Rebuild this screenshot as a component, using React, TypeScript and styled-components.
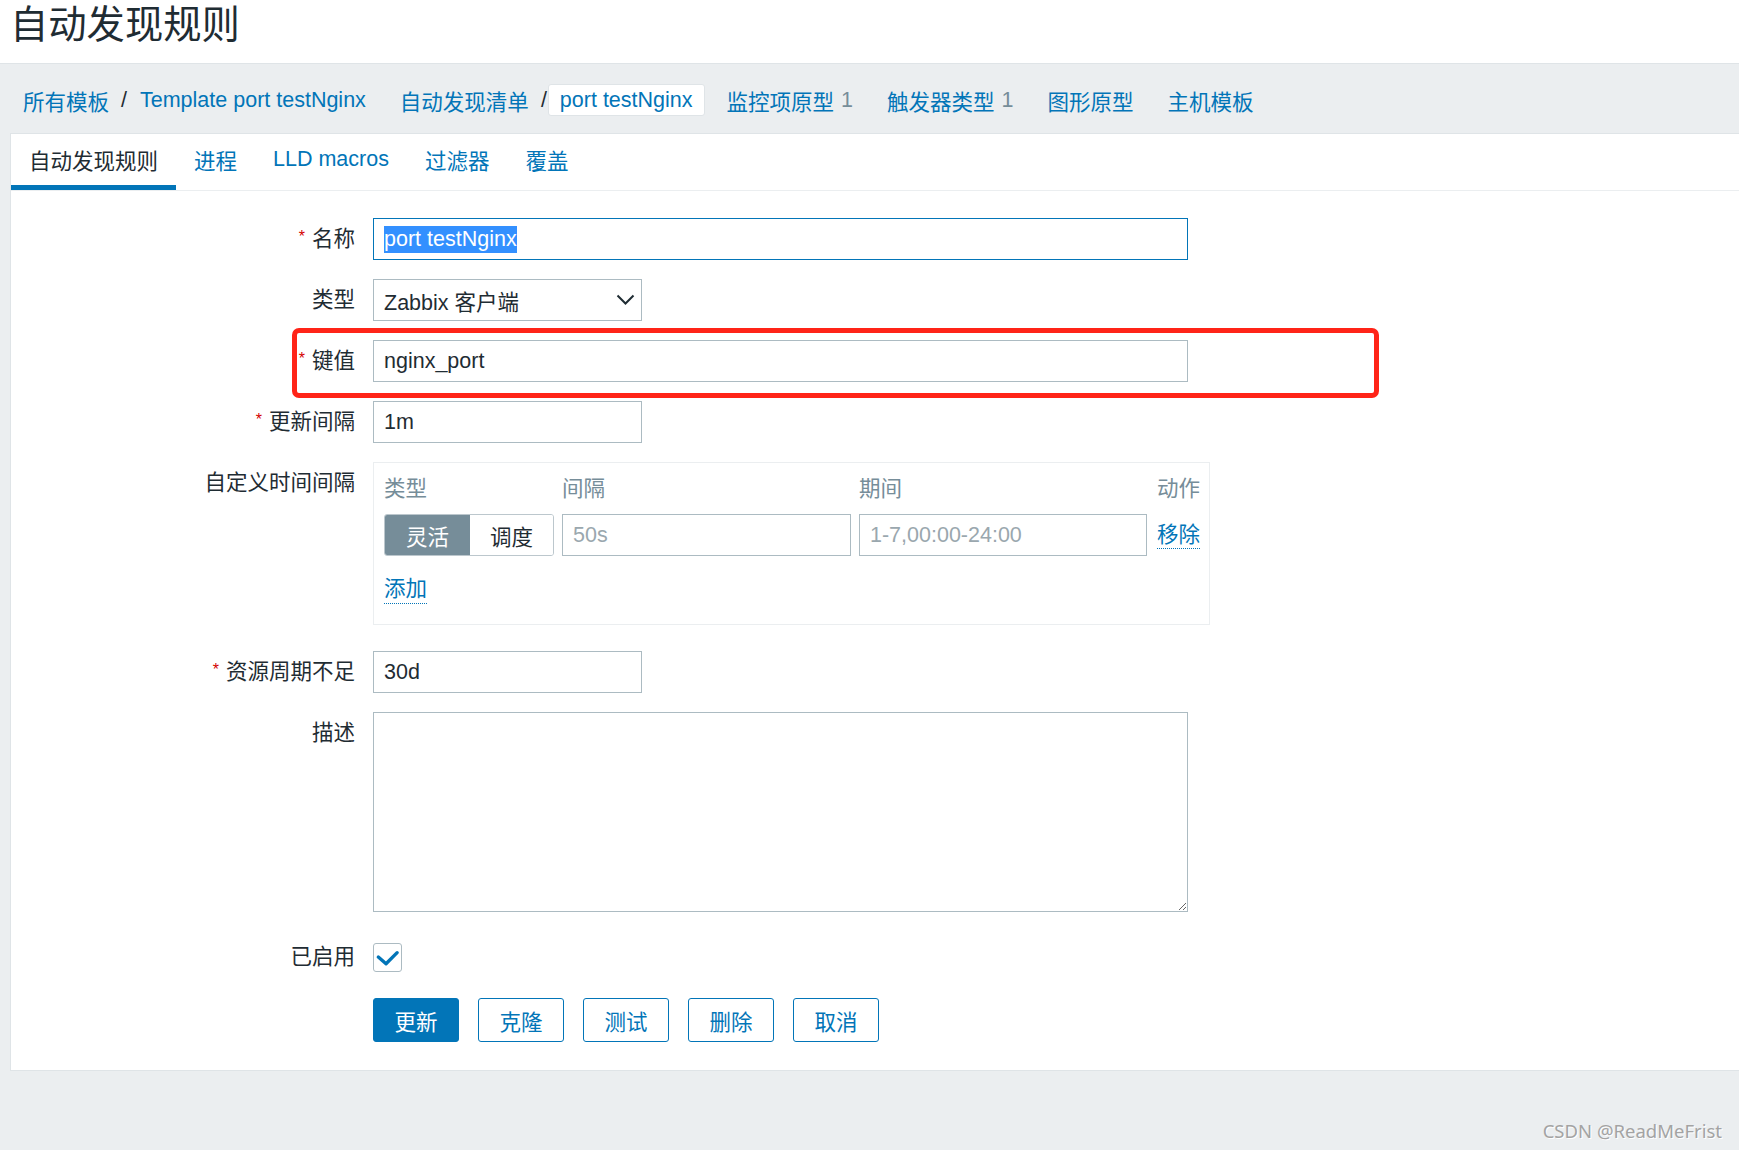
import React from "react";
import styled, { createGlobalStyle } from "styled-components";

const FONT = `"Liberation Sans", "Noto Sans CJK SC", sans-serif`;
const BLUE = "#0275b8";
const TEXT = "#1f2c33";
const GRAY = "#768d99";
const BORDER = "#acbbc2";

const GlobalStyle = createGlobalStyle`
  html, body { margin: 0; padding: 0; }
  body { background: #ebeef0; font-family: ${FONT}; color: ${TEXT}; }
  * { box-sizing: border-box; }
`;

const Page = styled.div`
  min-height: 1150px;
  position: relative;
  background: #ebeef0;
`;

const Header = styled.header`
  height: 63px;
  background: #fff;
  padding: 3px 0 0 10px;
`;

const Title = styled.h1`
  margin: 0;
  font-size: 38.3px;
  line-height: 44px;
  font-weight: normal;
  color: ${TEXT};
`;

const Band = styled.nav`
  border-top: 1px solid #dfe4e7;
  padding: 20px 0 17px 11px;
  display: flex;
  align-items: center;
  gap: 10px;
`;

const CrumbGroup = styled.div`
  display: flex;
  align-items: center;
`;

const Crumb = styled.a<{ $current?: boolean }>`
  display: flex;
  align-items: center;
  height: 32px;
  padding: 0 11px;
  font-size: 21.5px;
  color: ${BLUE};
  text-decoration: none;
  white-space: nowrap;
  background: ${(p) => (p.$current ? "#fff" : "transparent")};
  border: 1px solid ${(p) => (p.$current ? "#dfe4e7" : "transparent")};
  border-radius: 3px;
`;

const Sep = styled.span`
  font-size: 21.5px;
  color: ${TEXT};
  padding: 0 1px 0 0;
`;

const Count = styled.span`
  color: ${GRAY};
  margin-left: 7px;
`;

const Panel = styled.main`
  margin-left: 10px;
  background: #fff;
  border: 1px solid #dfe4e7;
  border-right: none;
`;

const TabBar = styled.div`
  display: flex;
  border-bottom: 1px solid #ebeef0;
`;

const Tab = styled.a<{ $active?: boolean }>`
  display: flex;
  align-items: center;
  height: 56px;
  padding: 0 18px 0;
  font-size: 21.5px;
  white-space: nowrap;
  color: ${(p) => (p.$active ? TEXT : BLUE)};
  border-bottom: 5px solid ${(p) => (p.$active ? BLUE : "transparent")};
`;

const Form = styled.form`
  display: flex;
  flex-direction: column;
  gap: 19px;
  padding: 27px 0 28px;
`;

const Row = styled.div<{ $mt?: number; $center?: boolean }>`
  position: relative;
  display: grid;
  grid-template-columns: 344px 1fr;
  column-gap: 18px;
  align-items: ${(p) => (p.$center ? "center" : "start")};
  margin-top: ${(p) => p.$mt ?? 0}px;
`;

const Label = styled.label<{ $lh?: number }>`
  display: block;
  text-align: right;
  font-size: 21.5px;
  height: ${(p) => p.$lh ?? 42}px;
  line-height: ${(p) => p.$lh ?? 42}px;
  white-space: nowrap;
  color: ${TEXT};
`;

const Req = styled.span`
  color: #d40000;
  font-size: 16px;
  line-height: 0;
  margin-right: 7px;
  vertical-align: 4px;
`;

const TextInput = styled.input<{ $w: number }>`
  width: ${(p) => p.$w}px;
  height: 42px;
  border: 1px solid ${BORDER};
  border-radius: 0;
  padding: 0 10px;
  font-family: ${FONT};
  font-size: 21.5px;
  color: ${TEXT};
  background: #fff;
  outline: none;
  display: block;
  &::placeholder { color: #9aa7ae; }
`;

const FocusedInput = styled.div<{ $w: number }>`
  width: ${(p) => p.$w}px;
  height: 42px;
  border: 1px solid ${BLUE};
  padding: 0 10px;
  display: flex;
  align-items: center;
  font-size: 21.5px;
`;

const Selected = styled.span`
  background: #3390ff;
  color: #fff;
  line-height: 27px;
`;

const Select = styled.div`
  width: 269px;
  height: 42px;
  border: 1px solid ${BORDER};
  padding: 0 6px 0 10px;
  display: flex;
  align-items: center;
  justify-content: space-between;
  font-size: 21.5px;
  color: ${TEXT};
`;

const Highlight = styled.div`
  position: absolute;
  left: 281px;
  top: -12px;
  width: 1087px;
  height: 70px;
  border: 5px solid #ff2418;
  border-radius: 7px;
  pointer-events: none;
`;

const IntervalBox = styled.div`
  width: 837px;
  border: 1px solid #ebeef0;
  padding: 10px 9px 20px 10px;
`;

const IntervalGrid = styled.div`
  display: grid;
  grid-template-columns: 170px 289px 288px auto;
  column-gap: 8px;
  row-gap: 9px;
  align-items: center;
  & > :nth-child(4n) { margin-left: 2px; }
`;

const Head = styled.div`
  font-size: 21.5px;
  line-height: 32px;
  color: ${GRAY};
`;

const Segmented = styled.div`
  display: flex;
  height: 42px;
  border: 1px solid #bcc7cd;
  border-radius: 3px;
  overflow: hidden;
`;

const Segment = styled.div<{ $active?: boolean; $w: number }>`
  width: ${(p) => p.$w}px;
  display: flex;
  align-items: center;
  justify-content: center;
  font-size: 21.5px;
  background: ${(p) => (p.$active ? GRAY : "#fff")};
  color: ${(p) => (p.$active ? "#fff" : TEXT)};
`;

const DotLink = styled.a`
  font-size: 21.5px;
  color: ${BLUE};
  text-decoration: none;
  border-bottom: 1px dotted ${BLUE};
  line-height: 26px;
  justify-self: start;
`;

const AddWrap = styled.div`
  margin-top: 20px;
  height: 28px;
  display: flex;
`;

const TextArea = styled.textarea`
  width: 815px;
  height: 200px;
  border: 1px solid ${BORDER};
  border-radius: 0;
  resize: vertical;
  font-family: ${FONT};
  font-size: 21.5px;
  padding: 6px 10px;
  display: block;
  outline: none;
`;

const CheckBox = styled.div`
  width: 29px;
  height: 29px;
  border: 1px solid ${BORDER};
  border-radius: 3px;
  display: flex;
  align-items: center;
  justify-content: center;
`;

const Buttons = styled.div`
  grid-column: 2;
  display: flex;
  gap: 19px;
`;

const Button = styled.button<{ $primary?: boolean }>`
  width: 86px;
  height: 44px;
  border-radius: 3px;
  border: 1px solid ${BLUE};
  background: ${(p) => (p.$primary ? BLUE : "#fff")};
  color: ${(p) => (p.$primary ? "#fff" : BLUE)};
  font-family: ${FONT};
  font-size: 21.5px;
  padding: 0;
  cursor: pointer;
`;

const Watermark = styled.div`
  position: absolute;
  right: 17px;
  bottom: 7px;
  font-family: "Noto Sans", "Open Sans", sans-serif;
  font-size: 18.5px;
  color: #a3a3a3;
  text-shadow: 1px 1px 0 #fff;
`;

export default function App() {
  return (
    <Page>
      <GlobalStyle />
      <Header>
        <Title>自动发现规则</Title>
      </Header>
      <Band>
        <CrumbGroup>
          <Crumb>所有模板</Crumb>
          <Sep>/</Sep>
          <Crumb>Template port testNginx</Crumb>
        </CrumbGroup>
        <CrumbGroup>
          <Crumb>自动发现清单</Crumb>
          <Sep>/</Sep>
          <Crumb $current>port testNginx</Crumb>
        </CrumbGroup>
        <Crumb>
          监控项原型<Count>1</Count>
        </Crumb>
        <Crumb>
          触发器类型<Count>1</Count>
        </Crumb>
        <Crumb>图形原型</Crumb>
        <Crumb>主机模板</Crumb>
      </Band>
      <Panel>
        <TabBar>
          <Tab $active>自动发现规则</Tab>
          <Tab>进程</Tab>
          <Tab>LLD macros</Tab>
          <Tab>过滤器</Tab>
          <Tab>覆盖</Tab>
        </TabBar>
        <Form onSubmit={(e) => e.preventDefault()}>
          <Row>
            <Label>
              <Req>*</Req>名称
            </Label>
            <FocusedInput $w={815}>
              <Selected>port testNginx</Selected>
            </FocusedInput>
          </Row>
          <Row>
            <Label>类型</Label>
            <Select>
              <span>Zabbix 客户端</span>
              <svg width="19" height="12" viewBox="0 0 19 12">
                <polyline
                  points="1.5,1.5 9.5,9.5 17.5,1.5"
                  fill="none"
                  stroke={TEXT}
                  strokeWidth="2"
                />
              </svg>
            </Select>
          </Row>
          <Row>
            <Label>
              <Req>*</Req>键值
            </Label>
            <TextInput $w={815} defaultValue="nginx_port" />
            <Highlight />
          </Row>
          <Row>
            <Label>
              <Req>*</Req>更新间隔
            </Label>
            <TextInput $w={269} defaultValue="1m" />
          </Row>
          <Row>
            <Label>自定义时间间隔</Label>
            <IntervalBox>
              <IntervalGrid>
                <Head>类型</Head>
                <Head>间隔</Head>
                <Head>期间</Head>
                <Head>动作</Head>
                <Segmented>
                  <Segment $active $w={86}>
                    灵活
                  </Segment>
                  <Segment $w={84}>调度</Segment>
                </Segmented>
                <TextInput $w={289} placeholder="50s" />
                <TextInput $w={288} placeholder="1-7,00:00-24:00" />
                <DotLink>移除</DotLink>
              </IntervalGrid>
              <AddWrap>
                <DotLink>添加</DotLink>
              </AddWrap>
            </IntervalBox>
          </Row>
          <Row $mt={7}>
            <Label>
              <Req>*</Req>资源周期不足
            </Label>
            <TextInput $w={269} defaultValue="30d" />
          </Row>
          <Row>
            <Label>描述</Label>
            <TextArea />
          </Row>
          <Row $mt={12} $center>
            <Label $lh={29}>已启用</Label>
            <CheckBox>
              <svg width="29" height="29" viewBox="0 0 29 29" style={{ marginLeft: -1, marginTop: -1 }}>
                <polyline
                  points="5.5,14 13.5,21 25,9.5"
                  fill="none"
                  stroke={BLUE}
                  strokeWidth="3.5"
                  strokeLinecap="round"
                  strokeLinejoin="round"
                />
              </svg>
            </CheckBox>
          </Row>
          <Row $mt={7}>
            <Buttons>
              <Button $primary>更新</Button>
              <Button>克隆</Button>
              <Button>测试</Button>
              <Button>删除</Button>
              <Button>取消</Button>
            </Buttons>
          </Row>
        </Form>
      </Panel>
      <Watermark>CSDN @ReadMeFrist</Watermark>
    </Page>
  );
}
